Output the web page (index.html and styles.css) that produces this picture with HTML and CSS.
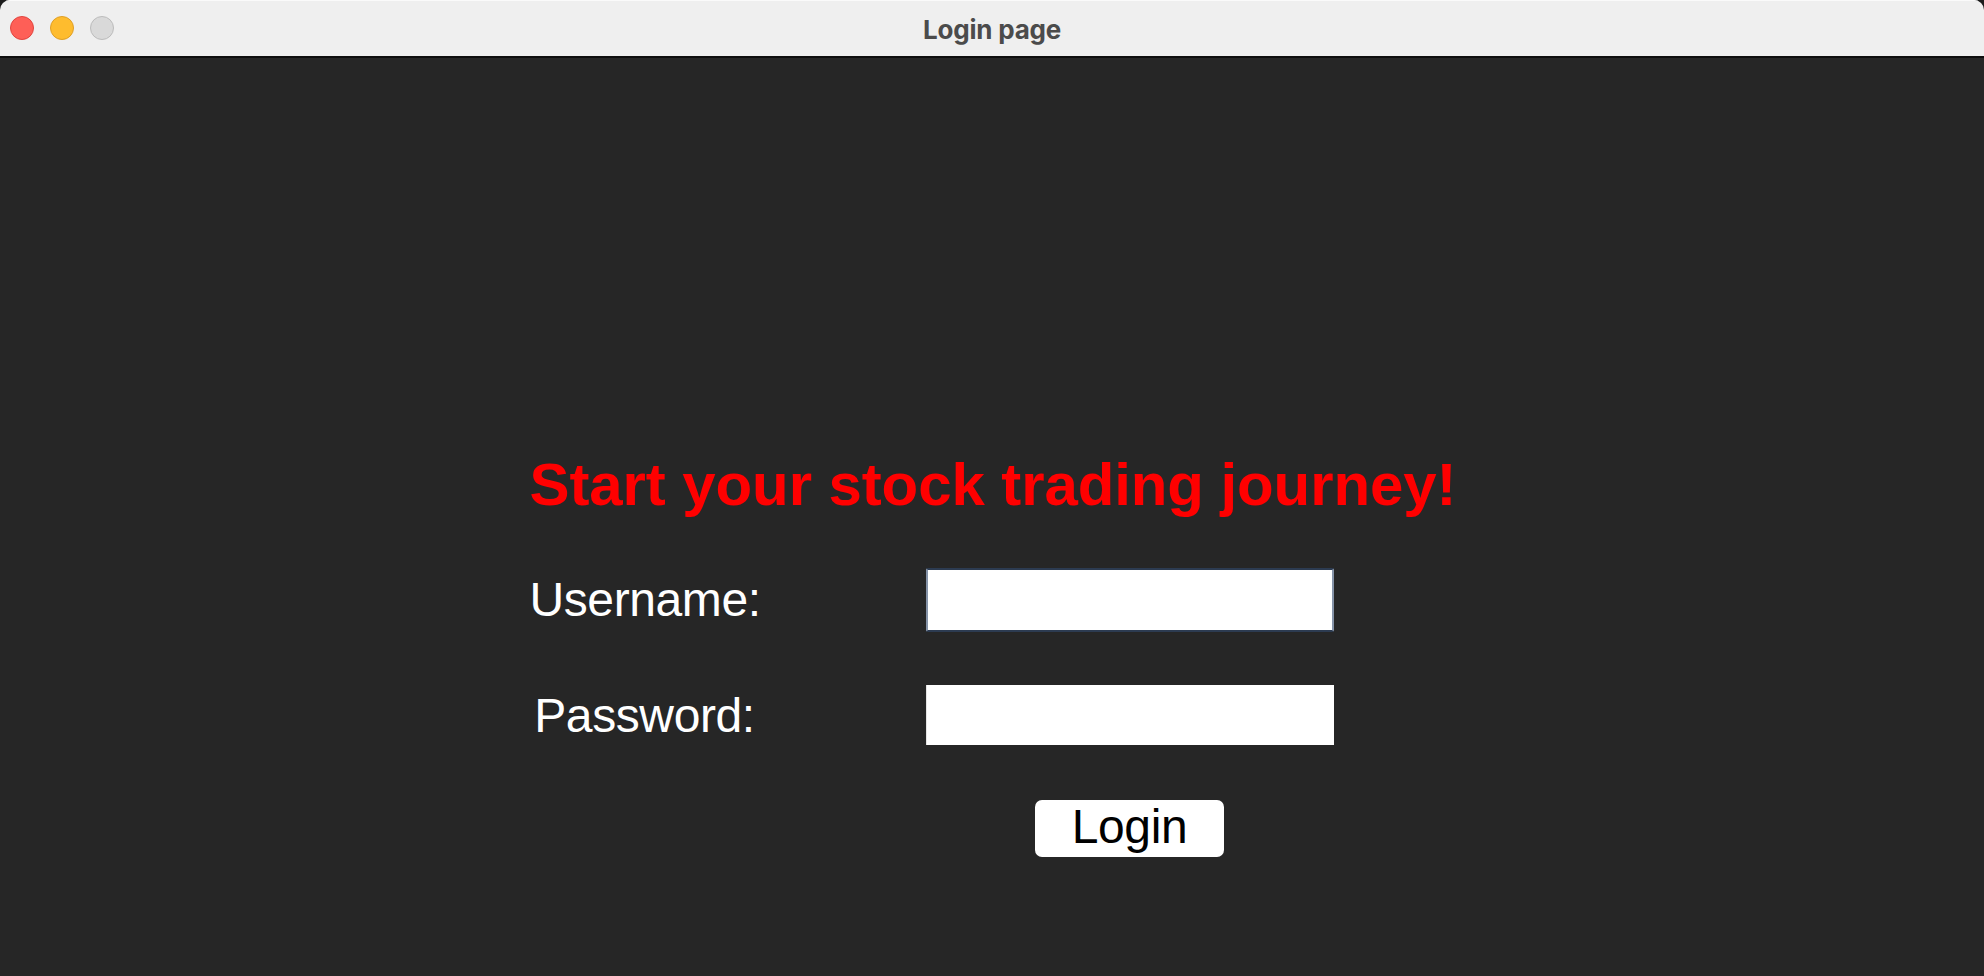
FILE: index.html
```html
<!DOCTYPE html>
<html lang="en">
<head>
<meta charset="utf-8">
<title>Login page</title>
<link rel="stylesheet" href="styles.css">
</head>
<body>
<div class="window">
  <header class="titlebar">
    <div class="lights">
      <span class="light red"></span>
      <span class="light yellow"></span>
      <span class="light gray"></span>
    </div>
    <div class="title">Login page</div>
  </header>
  <main class="content">
    <form class="login" onsubmit="return false">
      <h1 class="headline">Start your stock trading journey!</h1>
      <label class="label" for="user">Username:</label>
      <input class="field focused" id="user" type="text">
      <label class="label" for="pass">Password:</label>
      <input class="field" id="pass" type="password">
      <button class="login-btn" type="submit">Login</button>
    </form>
  </main>
</div>
</body>
</html>
```

FILE: styles.css
```css
html, body {
  margin: 0;
  padding: 0;
  background: #1c1c1c;
}

.window {
  width: 1984px;
  height: 976px;
  display: flex;
  flex-direction: column;
  background: #262626;
  border-radius: 10px 10px 0 0;
  overflow: hidden;
}

.titlebar {
  position: relative;
  flex: 0 0 58px;
  box-sizing: border-box;
  height: 58px;
  background: #efefef;
  border-top: 1px solid #fafafa;
  border-bottom: 2px solid #0e0e0e;
  display: flex;
  align-items: center;
  justify-content: center;
}

.lights {
  position: absolute;
  left: 10px;
  top: 15px;
  display: flex;
  gap: 16px;
}

.light {
  width: 24px;
  height: 24px;
  box-sizing: border-box;
  border-radius: 50%;
  border: 1px solid transparent;
}

.light.red { background: #fe5f57; border-color: #e1453f; }
.light.yellow { background: #febc2e; border-color: #df9f26; }
.light.gray { background: #d9d9d9; border-color: #bcbcbc; }

.title {
  font-family: "Inter", "Open Sans", sans-serif;
  font-weight: 700;
  font-size: 26px;
  color: #4b4b4b;
  letter-spacing: -0.2px;
  margin-top: 1px;
}

.content {
  flex: 1;
  display: flex;
  justify-content: center;
  align-items: flex-start;
  padding-top: 397px;
}

.login {
  display: grid;
  grid-template-columns: 230px 408px;
  column-gap: 166px;
  row-gap: 55px;
  align-items: center;
  width: 925px;
  font-family: "Liberation Sans", Arial, sans-serif;
}

.headline {
  grid-column: 1 / span 2;
  margin: 0;
  font-size: 60px;
  line-height: 60px;
  height: 60px;
  font-weight: 700;
  color: #ff0000;
  white-space: nowrap;
  letter-spacing: -0.1px;
}

.label {
  font-size: 48px;
  line-height: 48px;
  color: #ffffff;
  text-align: center;
  white-space: nowrap;
  letter-spacing: -0.4px;
}

.label + .field + .label {
  margin-top: 2px;
}

.field {
  width: 408px;
  height: 60px;
  box-sizing: border-box;
  margin: 0;
  padding: 0 8px;
  border: none;
  border-left: 1px solid #e4e4e4;
  background: #ffffff;
  outline: none;
  font-family: "Liberation Sans", Arial, sans-serif;
  font-size: 30px;
}

.field.focused {
  height: 64px;
  margin: -2px 0;
  border: 2px solid #2c3b51;
  border-left-color: #8593a8;
  border-right-color: #8593a8;
  border-radius: 2px;
}

.login-btn {
  grid-column: 2;
  justify-self: center;
  width: 189px;
  height: 57px;
  box-sizing: border-box;
  padding: 0 0 4px;
  border: none;
  border-radius: 7px;
  background: #ffffff;
  color: #000000;
  font-family: "Liberation Sans", Arial, sans-serif;
  font-size: 48px;
  line-height: 53px;
  letter-spacing: -0.4px;
  cursor: pointer;
}
```
